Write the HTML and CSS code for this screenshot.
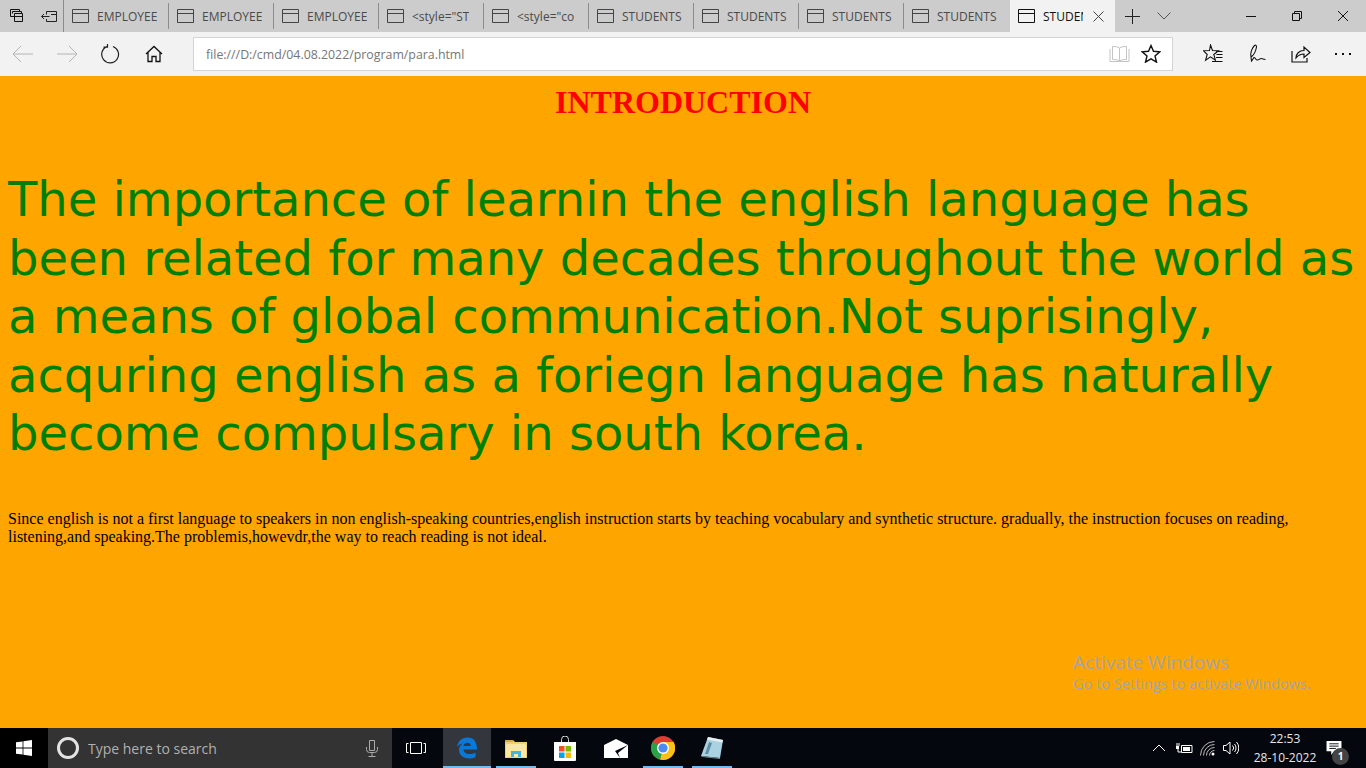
FILE: index.html
```html
<!DOCTYPE html>
<html lang="en">
<head>
    <meta charset="UTF-8">
    <title>STUDENTS</title>
    <link rel="stylesheet" href="styles.css">
</head>
<body>
    <svg class="defs" width="0" height="0">
        <symbol id="tab-icon" viewBox="0 0 17 14">
            <path d="M.5.5h16v13H.5zM.5 4.5h16" fill="none" stroke="currentColor"/>
        </symbol>
    </svg>

    <div class="tabbar">
        <div class="tab-tools">
            <svg class="tool" width="16" height="16" viewBox="0 0 16 16" fill="none" stroke="#111"><path d="M1.500 1.500h9v2M3.500 3.500h9v2M5.500 5.500h8v8h-8zM1.500 1.500v7h4M3.500 3.500v2M5.500 8.500h8"/></svg>
            <svg class="tool" width="16" height="16" viewBox="0 0 16 16" fill="none" stroke="#222"><path d="M5.500 3.500h10v10h-10v-2.500M5.500 3.500v3M.5 8.500h8M3 6L.5 8.500 3 11M10 6.500h5.500"/></svg>
        </div>
        <div class="tab"><svg class="tab-icon"><use href="#tab-icon"/></svg><span class="tab-title">EMPLOYEE</span></div>
        <div class="tab"><svg class="tab-icon"><use href="#tab-icon"/></svg><span class="tab-title">EMPLOYEE</span></div>
        <div class="tab"><svg class="tab-icon"><use href="#tab-icon"/></svg><span class="tab-title">EMPLOYEE</span></div>
        <div class="tab"><svg class="tab-icon"><use href="#tab-icon"/></svg><span class="tab-title">&lt;style="ST</span></div>
        <div class="tab"><svg class="tab-icon"><use href="#tab-icon"/></svg><span class="tab-title">&lt;style="co</span></div>
        <div class="tab"><svg class="tab-icon"><use href="#tab-icon"/></svg><span class="tab-title">STUDENTS</span></div>
        <div class="tab"><svg class="tab-icon"><use href="#tab-icon"/></svg><span class="tab-title">STUDENTS</span></div>
        <div class="tab"><svg class="tab-icon"><use href="#tab-icon"/></svg><span class="tab-title">STUDENTS</span></div>
        <div class="tab tab-last"><svg class="tab-icon"><use href="#tab-icon"/></svg><span class="tab-title">STUDENTS</span></div>
        <div class="tab-active">
            <svg class="tab-icon"><use href="#tab-icon"/></svg>
            <span class="tab-title-active">STUDENTS</span>
            <svg width="11" height="11" viewBox="0 0 11 11" stroke="#444"><path d="M.5.500l10 10M10.500.500l-10 10"/></svg>
        </div>
        <div class="new-tab">
            <svg width="15" height="15" viewBox="0 0 15 15" stroke="#222"><path d="M7.500 0v15M0 7.500h15"/></svg>
            <svg width="14" height="8" viewBox="0 0 14 8" fill="none" stroke="#555"><path d="M.5.500L7 7 13.500.500"/></svg>
        </div>
        <div class="win-buttons">
            <div class="win-btn"><svg width="10" height="10" viewBox="0 0 10 10" stroke="#111"><path d="M0 5.500h10"/></svg></div>
            <div class="win-btn"><svg width="10" height="10" viewBox="0 0 10 10" fill="none" stroke="#111"><path d="M.5 2.500h7v7h-7zM2.500 2.500v-2h7v7h-2"/></svg></div>
            <div class="win-btn"><svg width="10" height="10" viewBox="0 0 10 10" stroke="#111"><path d="M0 0l10 10M10 0L0 10"/></svg></div>
        </div>
    </div>

    <div class="toolbar">
        <div class="nav">
            <svg width="22" height="18" viewBox="0 0 22 18" fill="none" stroke="#b4b4b4"><path d="M1 9h20M9 1L1 9l8 8"/></svg>
            <svg width="22" height="18" viewBox="0 0 22 18" fill="none" stroke="#b4b4b4"><path d="M1 9h20M13 1l8 8-8 8"/></svg>
            <svg width="20" height="20" viewBox="0 0 20 20" fill="none" stroke="#222" stroke-width="1.200"><path d="M7 2.600A8.400 8.400 0 1 0 13 2.500M7.500 -1v4.200h-4"/></svg>
            <svg class="home" width="18" height="18" viewBox="0 0 18 18" fill="none" stroke="#111" stroke-width="1.300"><path d="M1 9l8-7.500L17 9M3 7.500V16.500h4v-5h4v5h4V7.500"/></svg>
        </div>
        <div class="address">
            <span class="url">file:///D:/cmd/04.08.2022/program/para.html</span>
            <svg width="21" height="18" viewBox="0 0 21 18" fill="none" stroke="#c4c4c4"><path d="M10.500 3C8.500 1.500 5 1.500 3.500 1.500v13c2 0 5 0 7 1.500 2-1.500 5-1.500 7-1.500v-13c-1.500 0-5 0-7 1.500zM10.500 3v13M1 4v12.500h19V4"/></svg>
            <svg width="20" height="19" viewBox="0 0 20 19" fill="none" stroke="#111" stroke-width="1.400"><path d="M10 1.500l2.500 5.800 6.300.6-4.800 4.100 1.500 6.100L10 14.900l-5.500 3.200L6 12 1.200 7.900l6.300-.6z"/></svg>
        </div>
        <div class="actions">
            <svg width="20" height="20" viewBox="0 0 20 20" fill="none" stroke="#111" stroke-width="1.100"><path d="M7.500 1l2 5.500 6 .3-4.700 3.700 1.600 5.700-4.900-3.300-4.900 3.300 1.600-5.700L.5 6.800l6-.3zM13 7.500h6.500M13.500 10.500h6M13 13.500h6.500M9 17.500h10.500"/></svg>
            <svg width="20" height="20" viewBox="0 0 20 20" fill="none" stroke="#111" stroke-width="1.100"><path d="M4 13C3 9 5 4 7.500 1.500c1-.8 2.300 0 2 1.500C9 6 7 11 4 13zM4 13l.5 4c1-1 2-3 2.500-3.500 1-.5 1.500 2 3 2.500 2 .5 3-2 4.500-1.500 1 .3 2 1 4 1"/></svg>
            <svg width="20" height="18" viewBox="0 0 20 18" fill="none" stroke="#111" stroke-width="1.200"><path d="M1 6v11h15v-4M5 13c0-4 3-7.500 8-7.500V2l6 5.500-6 5V9c-3.500 0-6 1.500-8 4z"/></svg>
            <span class="more"><i class="dot"></i><i class="dot"></i><i class="dot"></i></span>
        </div>
    </div>

    <div class="page">
        <h1 class="heading">INTRODUCTION</h1>
        <p class="lead">The importance of learnin the english language has been related for many decades throughout the world as a means of global communication.Not suprisingly, acquring english as a foriegn language has naturally become compulsary in south korea.</p>
        <p class="small">Since english is not a first language to speakers in non english-speaking countries,english instruction starts by teaching vocabulary and synthetic structure. gradually, the instruction focuses on reading, listening,and speaking.The problemis,howevdr,the way to reach reading is not ideal.</p>
        <div class="watermark">
            <div class="wm-title">Activate Windows</div>
            <div class="wm-sub">Go to Settings to activate Windows.</div>
        </div>
    </div>

    <div class="taskbar">
        <div class="start">
            <svg width="16" height="16" viewBox="0 0 16 16" fill="#fff"><path d="M0 2.300l6.600-.9v6.200H0zM7.400 1.300L16 0v7.600H7.400zM0 8.400h6.600v6.200L0 13.700zM7.400 8.400H16V16l-8.600-1.300z"/></svg>
        </div>
        <div class="search">
            <span class="cortana"></span>
            <span class="search-text">Type here to search</span>
            <svg width="12" height="17" viewBox="0 0 12 17" fill="none" stroke="#aaa"><path d="M3.500.5h5v10h-5zM.5 7v2.500a3 3 0 0 0 3 3h5a3 3 0 0 0 3-3V7M6 12.500v4M2.500 16.500h7"/></svg>
        </div>
        <div class="task-view">
            <svg width="20" height="14" viewBox="0 0 20 14" fill="none" stroke="#fff"><path d="M4.500 1.500h11v11h-11zM2.500 2.500h-2v9h2M17.500 2.500h2v9h-2"/></svg>
        </div>
        <div class="task-app task-edge">
            <svg width="22" height="22" viewBox="0 0 22 22"><path d="M1 10C2 4 6 .5 11.500.5 18 .5 21 5 21 12.500H7.500c.3 4.500 6.500 6 12 3v4.800C12 23.500 2.500 20.500 3 12.500c.2-2.500 1.500-4.500 3.500-6C4 7 2.500 8 1 10zM7.500 9h7.300c0-4-6.500-4.500-7.300 0z" fill="#0a78d7"/></svg>
        </div>
        <div class="task-app task-open">
            <svg width="22" height="19" viewBox="0 0 22 19"><path d="M0 1h8l2 2h12v16H0z" fill="#f0cf75"/><path d="M1 5h20v13H1z" fill="#fbe7a3"/><path d="M6 12h10v6h-3v-3H9v3H6z" fill="#3fb4e6"/><path d="M0 1h8v2H0z" fill="#d9a93f"/></svg>
        </div>
        <div class="task-app">
            <svg width="24" height="25" viewBox="0 0 24 25"><path d="M8.500 7V3.500a3.500 3.500 0 0 1 7 0V7" fill="none" stroke="#ddd"/><path d="M1 6h22v18a1 1 0 0 1-1 1H2a1 1 0 0 1-1-1z" fill="#fff"/><path d="M6 10h5.500v5.500H6z" fill="#f25022"/><path d="M12.500 10H18v5.500h-5.500z" fill="#7fba00"/><path d="M6 16.500h5.500V22H6z" fill="#00a4ef"/><path d="M12.500 16.500H18V22h-5.500z" fill="#ffb900"/></svg>
        </div>
        <div class="task-app task-mail">
            <svg width="24" height="19" viewBox="0 0 24 19"><path d="M0 6L12 0l12 6v13H0z" fill="#fff"/><path d="M0 6l11 6 13-6-10 8 2 5-5-7z" fill="#05070f"/></svg>
        </div>
        <div class="task-app task-open">
            <svg width="24" height="24" viewBox="0 0 24 24">
                <circle cx="12" cy="12" r="12" fill="#e33b2e"/>
                <path d="M12 12L22.400 18A12 12 0 0 1 9 23.600z" fill="#fbc116"/>
                <path d="M12 12L9 23.600A12 12 0 0 1 1.600 6z" fill="#2aa24a"/>
                <path d="M12 6h10.600A12 12 0 0 1 15 23.600L12 12z" fill="#fbc116"/>
                <circle cx="12" cy="12" r="6" fill="#fff"/>
                <circle cx="12" cy="12" r="4.600" fill="#4c8bf5"/>
            </svg>
        </div>
        <div class="task-app task-open">
            <svg width="23" height="24" viewBox="0 0 23 24"><path d="M7 1l15 3-3 18L0 20z" fill="#a9d3e2"/><path d="M7 1l15 3-.5 2.500L6 3.500z" fill="#e6eef0"/><path d="M4 18L8 6l3 1-4 11z" fill="#5f8fa3"/><path d="M0 20l19 2v1L1 21z" fill="#76888f"/></svg>
        </div>
        <div class="tray">
            <svg class="chevron" width="14" height="8" viewBox="0 0 14 8" fill="none" stroke="#fff"><path d="M1 7l6-6 6 6"/></svg>
            <svg width="17" height="12" viewBox="0 0 17 12" fill="none" stroke="#fff"><path d="M5.500 3.500h10.500v7H5.500z"/><path d="M7 5h7v4H7zM0 4h3v3H0z" fill="#fff" stroke="none"/><path d="M1 4V1M3 4V1M2 7v3h3"/></svg>
            <svg width="16" height="15" viewBox="0 0 16 15" fill="none" stroke="#bbb"><path d="M.5 14.500a14 14 0 0 1 14-14M3.500 14.500a11 11 0 0 1 11-11M6.500 14.500a8 8 0 0 1 8-8M9.500 14.500a5 5 0 0 1 5-5"/><circle cx="13" cy="13" r="1.500" fill="#fff" stroke="none"/></svg>
            <svg width="16" height="14" viewBox="0 0 16 14" fill="none" stroke="#fff"><path d="M.5 4.500h2.500L7 1v12L3 9.500H.5zM9.500 4.500a3.500 3.500 0 0 1 0 5M11.500 3a6 6 0 0 1 0 8M13.500 1a9 9 0 0 1 0 12"/></svg>
            <div class="clock"><div>22:53</div><div>28-10-2022</div></div>
            <div class="notify">
                <svg width="16" height="14" viewBox="0 0 16 15"><path d="M0 0h16v11H8l-3 4v-4H0z" fill="#fff"/><path d="M3 3h10M3 5.500h10M3 8h7" stroke="#05070f"/></svg>
                <span class="badge">1</span>
            </div>
        </div>
    </div>
</body>
</html>
```

FILE: styles.css
```css
* {
    box-sizing: border-box;
}

html, body {
    margin: 0;
    height: 100%;
    overflow: hidden;
}

body {
    display: flex;
    flex-direction: column;
    height: 768px;
    font-family: "Open Sans", sans-serif;
}

.defs {
    display: none;
}

svg {
    flex-shrink: 0;
    display: block;
}

/* tab strip */
.tabbar {
    display: flex;
    height: 32px;
    background-color: #cccccc;
    font-size: 12px;
    color: #4a4a4a;
}

.tab-tools {
    width: 64px;
    display: flex;
    align-items: center;
    gap: 16px;
    padding-left: 9px;
    border-right: 1px solid #8c8c8c;
}

.tab {
    width: 105px;
    height: 26px;
    margin-top: 3px;
    display: flex;
    align-items: center;
    padding-left: 8px;
    border-right: 1px solid #8c8c8c;
}

.tab-last {
    width: 106px;
    height: 32px;
    margin-top: 0;
    border-right: 0;
}

.tab-icon {
    width: 17px;
    height: 14px;
    margin-right: 8px;
    color: #444;
}

.tab-title {
    white-space: nowrap;
    overflow: hidden;
}

.tab-active {
    width: 105px;
    display: flex;
    align-items: center;
    padding-left: 8px;
    background-color: #f2f2f2;
    color: #111;
}

.tab-active .tab-icon {
    color: #111;
}

.tab-title-active {
    width: 40px;
    margin-right: 10px;
    white-space: nowrap;
    overflow: hidden;
}

.new-tab {
    display: flex;
    align-items: center;
    gap: 17px;
    padding-left: 10px;
}

.win-buttons {
    margin-left: auto;
    display: flex;
}

.win-btn {
    width: 46px;
    display: flex;
    align-items: center;
    justify-content: center;
}

/* address row */
.toolbar {
    display: flex;
    align-items: center;
    height: 44px;
    background-color: #f2f2f2;
}

.nav {
    width: 193px;
    display: flex;
    align-items: center;
    padding-left: 12px;
    gap: 22px;
}

.home {
    margin-left: 3px;
}

.address {
    width: 980px;
    height: 34px;
    margin-top: -1px;
    display: flex;
    align-items: center;
    padding: 0 11px 0 12px;
    gap: 11px;
    background-color: #fff;
    border: 1px solid #d4d4d4;
}

.url {
    flex: 1;
    padding-top: 1px;
    font-size: 12.35px;
    color: #767676;
}

.actions {
    flex: 1;
    display: flex;
    align-items: center;
    padding-left: 30px;
    gap: 24px;
}

.more {
    display: flex;
    gap: 5px;
}

.dot {
    width: 2px;
    height: 2px;
    background-color: #111;
}

/* the page itself */
.page {
    position: relative;
    height: 652px;
    padding: 8px;
    background-color: orange;
    font-family: "Liberation Serif", serif;
}

.heading {
    margin: 0;
    text-align: center;
    font-size: 32px;
    line-height: 37px;
    color: red;
}

.lead {
    margin: 49px 0 0;
    font-family: "DejaVu Sans", sans-serif;
    font-size: 48px;
    line-height: 58.5px;
    color: green;
}

.small {
    margin: 47px 0 0;
    font-size: 16px;
    line-height: 18px;
    color: black;
}

.watermark {
    position: absolute;
    left: 1073px;
    top: 574px;
    font-family: "Open Sans", sans-serif;
    color: #a8a6a2;
}

.wm-title {
    font-size: 19px;
    line-height: 24px;
}

.wm-sub {
    font-size: 14.5px;
    line-height: 20px;
}

/* windows taskbar */
.taskbar {
    display: flex;
    height: 40px;
    background-color: #05070f;
    color: #fff;
}

.start {
    width: 48px;
    display: flex;
    align-items: center;
    justify-content: center;
    background-color: #000;
}

.search {
    width: 344px;
    display: flex;
    align-items: center;
    padding: 0 14px 0 9px;
    background-color: #333333;
}

.cortana {
    width: 22px;
    height: 22px;
    border: 3px solid #e4e4e4;
    border-radius: 50%;
}

.search-text {
    flex: 1;
    margin-left: 9px;
    font-size: 14px;
    color: #b0b0b0;
}

.task-view {
    width: 48px;
    margin-right: 3px;
    display: flex;
    align-items: center;
    justify-content: center;
}

.task-app {
    position: relative;
    width: 48px;
    height: 40px;
    display: flex;
    align-items: center;
    justify-content: center;
    margin-right: 1px;
}

.task-open::after {
    content: "";
    position: absolute;
    left: 4px;
    right: 4px;
    bottom: 0;
    height: 2px;
    background-color: #76b9ed;
}

.task-edge {
    background-color: #33363c;
    border-bottom: 2px solid #76b9ed;
    padding-top: 2px;
}

.task-mail {
    padding-left: 4px;
}

.tray {
    margin-left: auto;
    display: flex;
    align-items: center;
    gap: 7px;
    padding-right: 24px;
}

.chevron {
    margin-right: 3px;
}

.clock {
    width: 66px;
    margin: 0 1px 0 6px;
    text-align: center;
    font-size: 12px;
    line-height: 19px;
    color: #e6e6e6;
}

.notify {
    position: relative;
}

.badge {
    position: absolute;
    left: 6px;
    top: 7px;
    width: 17px;
    height: 17px;
    border-radius: 50%;
    background-color: #444;
    font-size: 10px;
    font-weight: bold;
    line-height: 17px;
    text-align: center;
}
```
